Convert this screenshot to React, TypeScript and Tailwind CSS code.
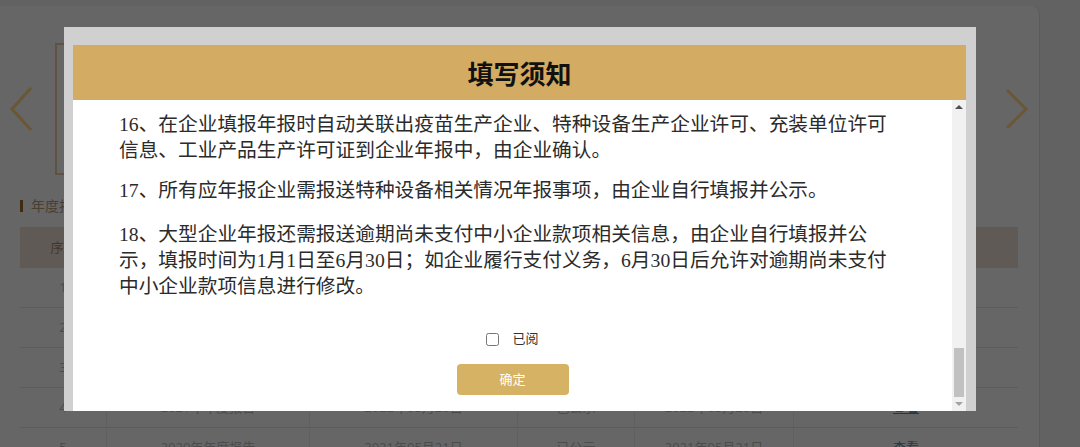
import React from "react";

const rows = [
  { n: "1", name: "2024年年度报告", date: "2025年05月20日", st: "已公示", pub: "2025年05月20日" },
  { n: "2", name: "2023年年度报告", date: "2024年05月20日", st: "已公示", pub: "2024年05月20日" },
  { n: "3", name: "2022年年度报告", date: "2023年05月20日", st: "已公示", pub: "2023年05月20日" },
  { n: "4", name: "2021年年度报告", date: "2022年05月20日", st: "已公示", pub: "2022年05月20日" },
  { n: "5", name: "2020年年度报告", date: "2021年05月21日", st: "已公示", pub: "2021年05月21日" },
];

export default function App() {
  return (
    <div
      className="relative w-[1080px] h-[447px] overflow-hidden bg-[#626262] pt-[6px]"
      style={{ fontFamily: '"Noto Sans", "Noto Sans CJK SC", sans-serif' }}
    >
      {/* background page card (dimmed) */}
      <div className="w-[1040px] h-[460px] bg-[#666666] rounded-tr-[8px] border-r border-[#5b5b5b] pt-[37px]">
        <div className="flex items-center h-[132px]">
          <svg className="ml-[9px] shrink-0" width="24" height="46" viewBox="0 0 24 46">
            <path d="M22 2 L3 23 L22 44" fill="none" stroke="#6a5735" strokeWidth="3" />
          </svg>
          <div className="ml-[22px] w-[900px] h-full border-2 border-[#5f5242]" />
          <svg className="ml-auto mr-[10px] shrink-0" width="24" height="42" viewBox="0 0 24 42">
            <path d="M2 2 L21 21 L2 40" fill="none" stroke="#6a5735" strokeWidth="3" />
          </svg>
        </div>
        <div className="flex items-center gap-[8px] ml-[20px] mt-[24px] h-[14px]">
          <div className="w-[3px] h-[12px] bg-[#3e2b12]" />
          <span className="text-[14px] leading-[14px] text-[#4a3e31]">年度报告</span>
        </div>
        <div className="ml-[20px] mt-[14px] w-[998px] text-[13px] text-[#4c4c4c]">
          <div className="flex h-[41px] bg-[#5f5a55] items-center text-[#45362a]">
            <div className="w-[87px] text-center">序号</div>
            <div className="w-[203px] text-center">报告年度</div>
            <div className="w-[208px] text-center">报送日期</div>
            <div className="w-[117px] text-center">公示状态</div>
            <div className="w-[159px] text-center">公示日期</div>
            <div className="w-[224px] text-center">操作</div>
          </div>
          {rows.map((r) => (
            <div key={r.n} className="flex h-[40px] border-b border-[#5c5c5c] items-stretch">
              <div className="w-[87px] flex items-center justify-center border-r border-[#606060]">{r.n}</div>
              <div className="w-[203px] flex items-center justify-center border-r border-[#606060]">{r.name}</div>
              <div className="w-[208px] flex items-center justify-center border-r border-[#606060]">{r.date}</div>
              <div className="w-[117px] flex items-center justify-center border-r border-[#606060]">{r.st}</div>
              <div className="w-[159px] flex items-center justify-center border-r border-[#606060]">{r.pub}</div>
              <div className="w-[224px] flex items-center justify-center">
                <span className="underline text-[#24364f]">查看</span>
              </div>
            </div>
          ))}
        </div>
      </div>

      {/* modal */}
      <div className="absolute left-[64px] top-[27px] w-[912px] h-[384px] bg-[#d0d0d0] pt-[18px] pl-[9px] pr-[10px] flex flex-col">
        <div className="h-[55px] bg-[#d3ab62] flex items-center justify-center">
          <span
            className="text-[26px] font-bold text-[#111] leading-none"
            style={{ fontFamily: '"Noto Sans CJK SC", sans-serif' }}
          >
            填写须知
          </span>
        </div>
        <div className="flex-1 bg-white flex">
          <div className="flex-1 flex flex-col">
            <div
              className="pl-[46px] pt-[11px] text-[19.7px] leading-[26px] text-[#2b2b2b]"
              style={{ fontFamily: '"Liberation Serif", "Noto Sans CJK SC", serif' }}
            >
              <p className="whitespace-nowrap">
                16、在企业填报年报时自动关联出疫苗生产企业、特种设备生产企业许可、充装单位许可
                <br />
                信息、工业产品生产许可证到企业年报中，由企业确认。
              </p>
              <p className="mt-[14px] whitespace-nowrap">
                17、所有应年报企业需报送特种设备相关情况年报事项，由企业自行填报并公示。
              </p>
              <p className="mt-[18px] whitespace-nowrap">
                18、大型企业年报还需报送逾期尚未支付中小企业款项相关信息，由企业自行填报并公
                <br />
                示，填报时间为1月1日至6月30日；如企业履行支付义务，6月30日后允许对逾期尚未支付
                <br />
                中小企业款项信息进行修改。
              </p>
            </div>
            <div className="mt-[30px] h-[20px] flex items-center justify-center gap-[13px] text-[13px] text-[#333]">
              <input type="checkbox" className="w-[13px] h-[13px]" />
              <span>已阅</span>
            </div>
            <div className="mt-[15px] flex justify-center">
              <button className="w-[112px] h-[31px] rounded-[4px] bg-[#d6b264] text-white text-[13px]">
                确定
              </button>
            </div>
          </div>
          {/* scrollbar */}
          <div className="w-[14px] bg-[#f1f1f1] flex flex-col">
            <div className="h-[14px] flex items-center justify-center">
              <div className="w-0 h-0 border-l-[4px] border-r-[4px] border-b-[4px] border-l-transparent border-r-transparent border-b-[#505050]" />
            </div>
            <div className="flex-1" />
            <div className="h-[49px] mx-[2px] bg-[#c1c1c1]" />
            <div className="h-[14px] flex items-center justify-center">
              <div className="w-0 h-0 border-l-[4px] border-r-[4px] border-t-[4px] border-l-transparent border-r-transparent border-t-[#a3a3a3]" />
            </div>
          </div>
        </div>
      </div>
    </div>
  );
}
